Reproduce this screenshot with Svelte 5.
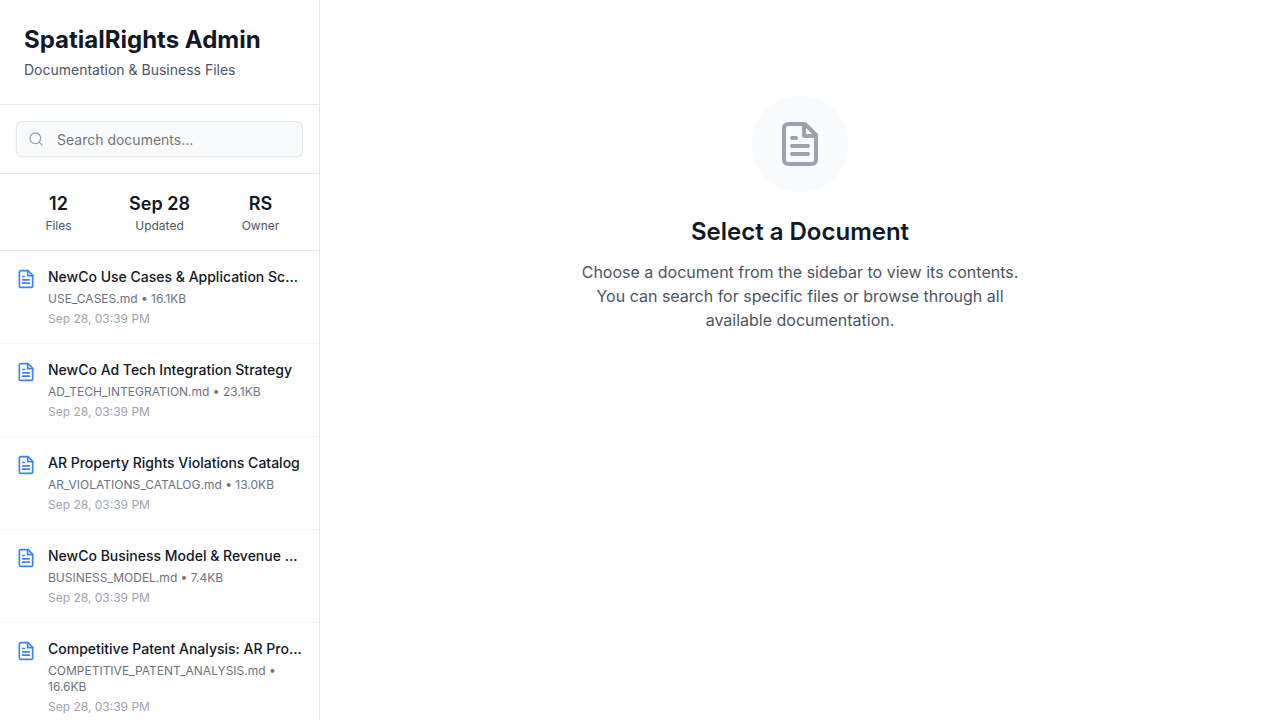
<script>
  const files = [
    ['NewCo Use Cases & Application Scenarios', 'USE_CASES.md', '16.1KB'],
    ['NewCo Ad Tech Integration Strategy', 'AD_TECH_INTEGRATION.md', '23.1KB'],
    ['AR Property Rights Violations Catalog', 'AR_VIOLATIONS_CATALOG.md', '13.0KB'],
    ['NewCo Business Model & Revenue Strategy', 'BUSINESS_MODEL.md', '7.4KB'],
    ['Competitive Patent Analysis: AR Property Rights', 'COMPETITIVE_PATENT_ANALYSIS.md', '16.6KB']
  ];
  const stats = [['12', 'Files'], ['Sep 28', 'Updated'], ['RS', 'Owner']];
</script>

{#snippet fileIcon()}
  <svg class="icon" viewBox="0 0 24 24" fill="none" stroke="currentColor" stroke-width="2" stroke-linecap="round" stroke-linejoin="round">
    <path d="M14.5 2H6a2 2 0 0 0-2 2v16a2 2 0 0 0 2 2h12a2 2 0 0 0 2-2V7.5L14.5 2z" />
    <polyline points="14 2 14 8 20 8" />
    <path d="M10 9H8" /><path d="M16 13H8" /><path d="M16 17H8" />
  </svg>
{/snippet}

<div class="app">
  <aside>
    <header>
      <h1>SpatialRights Admin</h1>
      <p>Documentation &amp; Business Files</p>
    </header>
    <div class="search">
      <label>
        <svg viewBox="0 0 24 24" fill="none" stroke="currentColor" stroke-width="2" stroke-linecap="round" stroke-linejoin="round"><circle cx="11" cy="11" r="8" /><path d="m21 21-4.3-4.3" /></svg>
        <input placeholder="Search documents..." />
      </label>
    </div>
    <div class="stats">
      {#each stats as [value, name]}
        <div><strong>{value}</strong><span>{name}</span></div>
      {/each}
    </div>
    <div class="list">
      {#each files as [title, file, size]}
        <div class="item">
          {@render fileIcon()}
          <div class="info">
            <h3>{title}</h3>
            <p class="meta">{file} • {size}</p>
            <p class="date">Sep 28, 03:39 PM</p>
          </div>
        </div>
      {/each}
    </div>
  </aside>
  <main>
    <div class="circle">{@render fileIcon()}</div>
    <h2>Select a Document</h2>
    <p>Choose a document from the sidebar to view its contents. You can search for specific files or browse through all available documentation.</p>
  </main>
</div>

<style>
  * { box-sizing: border-box; margin: 0; }
  .app { display: flex; height: 100vh; overflow: hidden; font-family: Inter, sans-serif; color: #111827; background: #fff; }
  aside { width: 320px; flex: none; display: flex; flex-direction: column; border-right: 1px solid #e5e7eb; }
  header { padding: 24px; height: 105px; border-bottom: 1px solid #e5e7eb; }
  h1 { font-size: 24px; line-height: 32px; font-weight: 700; }
  header p { margin-top: 4px; font-size: 14px; line-height: 20px; color: #4b5563; }
  .search { padding: 16px; height: 69px; border-bottom: 1px solid #e5e7eb; }
  label { display: flex; align-items: center; gap: 13px; height: 36px; padding: 0 12px 0 11px; border: 1px solid #e5e7eb; border-radius: 6px; background: #f9fafb; box-shadow: 0 1px 2px rgb(0 0 0 / 5%); }
  label svg { width: 16px; height: 16px; color: #9ca3af; flex: none; }
  input { flex: 1; min-width: 0; height: 22px; border: 0; padding: 1px 0 0; outline: 0; background: transparent; font: 14px/20px Inter, sans-serif; }
  input::placeholder { color: #757575; opacity: 1; }
  .stats { height: 77px; padding: 16px; display: grid; grid-template-columns: repeat(3, 1fr); gap: 16px; text-align: center; border-bottom: 1px solid #e5e7eb; }
  .stats div { white-space: nowrap; }
  strong { display: block; font-size: 18px; line-height: 28px; font-weight: 600; }
  .stats span { display: block; font-size: 12px; line-height: 16px; color: #4b5563; }
  .list { flex: 1; min-height: 0; overflow: hidden; }
  .item { display: flex; gap: 12px; padding: 16px; border-bottom: 1px solid #f3f4f6; }
  .item :global(.icon) { width: 20px; height: 20px; margin-top: 2px; color: #3b82f6; flex: none; }
  .info { flex: 1; min-width: 0; }
  h3 { font-size: 14px; line-height: 20px; font-weight: 500; white-space: nowrap; overflow: hidden; text-overflow: ellipsis; }
  .meta { margin-top: 4px; font-size: 12px; line-height: 16px; color: #6b7280; }
  .date { margin-top: 4px; font-size: 12px; line-height: 16px; color: #9ca3af; }
  main { flex: 1; display: flex; flex-direction: column; align-items: center; padding-top: 96px; text-align: center; }
  .circle { width: 96px; height: 96px; border-radius: 50%; background: #f9fafb; display: grid; place-items: center; color: #9ca3af; }
  .circle :global(.icon) { width: 48px; height: 48px; }
  h2 { margin-top: 24px; font-size: 24px; line-height: 32px; font-weight: 600; }
  main p { margin-top: 12px; width: 448px; font-size: 16px; line-height: 24px; color: #4b5563; }
</style>
